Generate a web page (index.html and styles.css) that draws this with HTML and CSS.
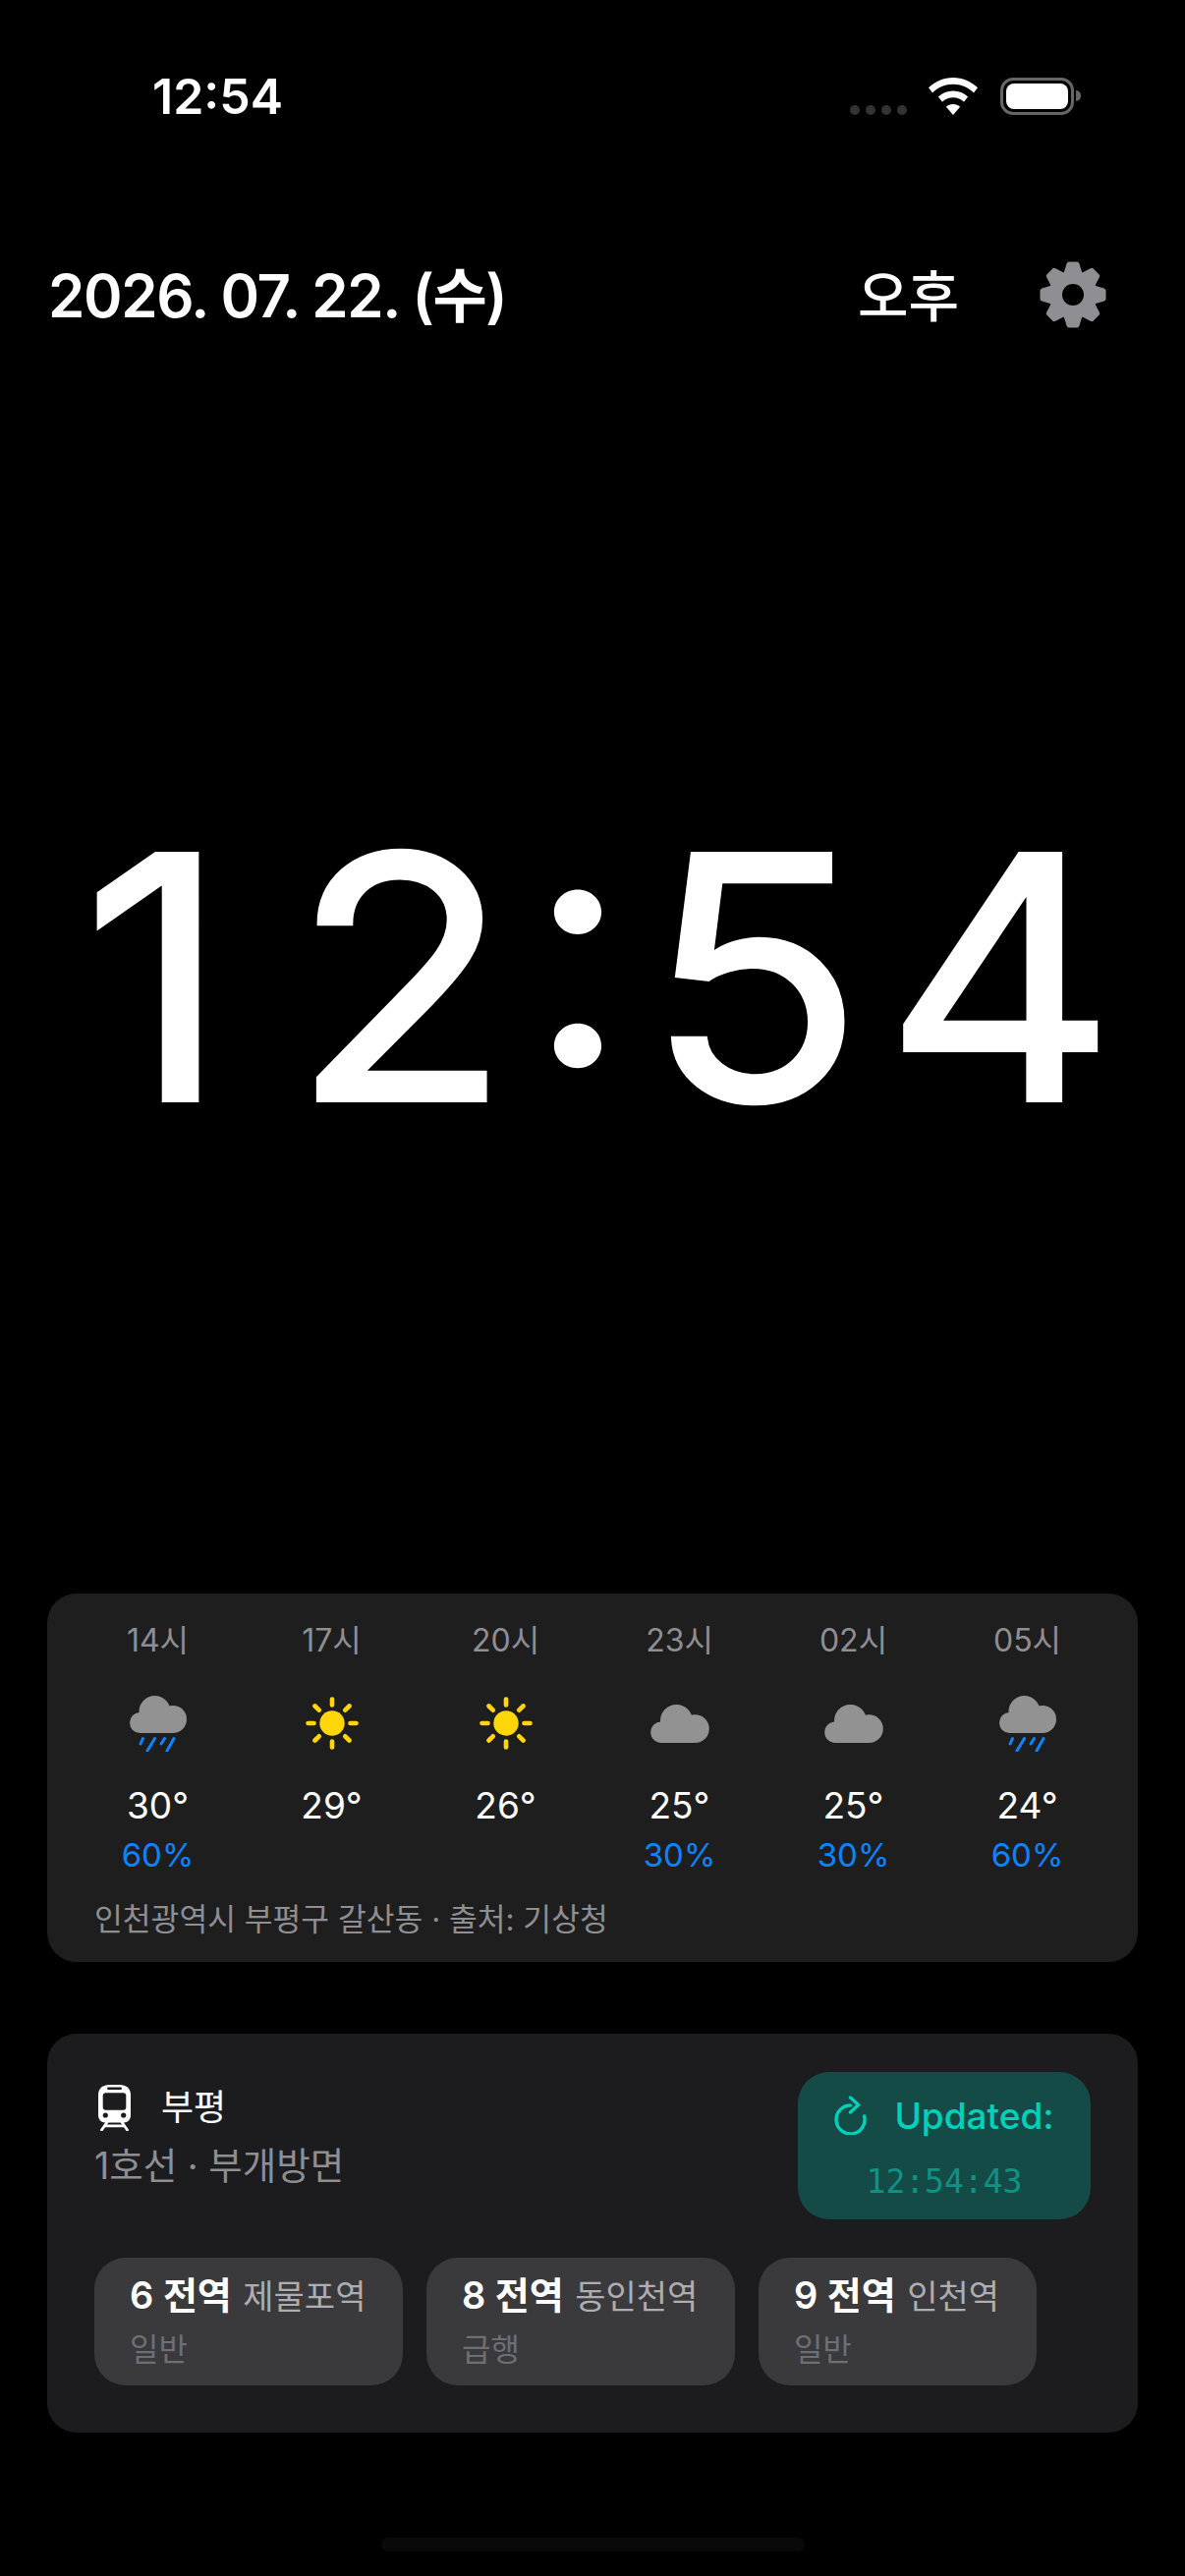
FILE: index.html
```html
<!DOCTYPE html>
<html lang="ko">
<head>
<meta charset="utf-8">
<title>Clock</title>
<link rel="stylesheet" href="styles.css">
</head>
<body>
<svg class="defs" width="0" height="0">
 <symbol id="cloud" viewBox="0 0 58 38">
  <circle cx="10.5" cy="27.5" r="10.5"/>
  <circle cx="25.5" cy="16" r="16"/>
  <circle cx="44" cy="24" r="14"/>
  <rect x="10" y="16" width="34" height="22"/>
 </symbol>
 <symbol id="sun" viewBox="0 0 54 54">
  <circle cx="27" cy="27" r="12.7" fill="#ffd60a"/>
  <g stroke="#ffd60a" stroke-width="4.6" stroke-linecap="round">
   <path d="M27 2.5V8.5M27 45.5V51.5M2.5 27H8.5M45.5 27H51.5M9.5 9.5L13.7 13.7M44.5 9.5L40.3 13.7M9.5 44.5L13.7 40.3M44.5 44.5L40.3 40.3"/>
  </g>
 </symbol>
 <symbol id="tooth" viewBox="0 0 68 68">
  <path d="M24 14L27.500 2.500Q28 .5 30 .5H38Q40 .5 40.500 2.500L44 14Z"/>
 </symbol>
</svg>

<div class="status">
 <span class="status-time">12:54</span>
 <div class="status-icons">
  <div class="dots"><i></i><i></i><i></i><i></i></div>
  <svg class="wifi" width="50" height="38" viewBox="0 0 50 38">
   <path fill="#fff" d="M25 0C34.5 0 43.3 3.8 50 10.300L46 15.500C40.400 10 33 6.800 25 6.800S9.600 10 4 15.500L0 10.300C6.700 3.800 15.500 0 25 0Z"/>
   <path fill="#fff" d="M25 13.500C30.800 13.500 36.100 15.700 40.100 19.500L36 24.700C33.100 21.900 29.300 20.200 25 20.200S16.900 21.900 14 24.700L9.900 19.500C13.900 15.700 19.200 13.500 25 13.500Z"/>
   <path fill="#fff" d="M25 27C27.800 27 30.300 28 32.100 29.800L25 38L17.900 29.800C19.700 28 22.200 27 25 27Z"/>
  </svg>
  <div class="battery"><div class="battery-fill"></div></div>
 </div>
</div>

<div class="date-row">
 <span class="date">2026. 07. 22. (수)</span>
 <span class="ampm">오후</span>
 <svg class="gear" width="68" height="68" viewBox="0 0 68 68">
  <g fill="#8e8e93">
   <circle cx="34" cy="34" r="24.500"/>
   <use href="#tooth" width="68" height="68"/>
   <use href="#tooth" width="68" height="68" transform="rotate(45 34 34)"/>
   <use href="#tooth" width="68" height="68" transform="rotate(90 34 34)"/>
   <use href="#tooth" width="68" height="68" transform="rotate(135 34 34)"/>
   <use href="#tooth" width="68" height="68" transform="rotate(180 34 34)"/>
   <use href="#tooth" width="68" height="68" transform="rotate(225 34 34)"/>
   <use href="#tooth" width="68" height="68" transform="rotate(270 34 34)"/>
   <use href="#tooth" width="68" height="68" transform="rotate(315 34 34)"/>
  </g>
  <circle cx="34" cy="34" r="11" fill="#000"/>
 </svg>
</div>

<div class="clock"><span class="digit">1</span><span class="digit">2</span><span class="digit colon">:</span><span class="digit">5</span><span class="digit">4</span></div>

<div class="card weather">
 <div class="hours">
  <div class="hour">
   <div class="hour-label">14시</div>
   <div class="hour-icon">
    <svg width="58" height="57" viewBox="0 0 58 57">
     <use href="#cloud" width="58" height="38" fill="#929292"/>
     <path d="M13.500 43.500L11 49M25.500 43.500L18 56M35.500 43.500L32 49M45 43.500L38 56" stroke="#0a84ff" stroke-width="3" stroke-linecap="round"/>
    </svg>
   </div>
   <div class="temp">30°</div>
   <div class="pop">60%</div>
  </div>
  <div class="hour">
   <div class="hour-label">17시</div>
   <div class="hour-icon"><svg width="54" height="54"><use href="#sun"/></svg></div>
   <div class="temp">29°</div>
   <div class="pop"></div>
  </div>
  <div class="hour">
   <div class="hour-label">20시</div>
   <div class="hour-icon"><svg width="54" height="54"><use href="#sun"/></svg></div>
   <div class="temp">26°</div>
   <div class="pop"></div>
  </div>
  <div class="hour">
   <div class="hour-label">23시</div>
   <div class="hour-icon"><svg width="60" height="39"><use href="#cloud" width="60" height="39" fill="#929292"/></svg></div>
   <div class="temp">25°</div>
   <div class="pop">30%</div>
  </div>
  <div class="hour">
   <div class="hour-label">02시</div>
   <div class="hour-icon"><svg width="60" height="39"><use href="#cloud" width="60" height="39" fill="#929292"/></svg></div>
   <div class="temp">25°</div>
   <div class="pop">30%</div>
  </div>
  <div class="hour">
   <div class="hour-label">05시</div>
   <div class="hour-icon">
    <svg width="58" height="57" viewBox="0 0 58 57">
     <use href="#cloud" width="58" height="38" fill="#929292"/>
     <path d="M13.500 43.500L11 49M25.500 43.500L18 56M35.500 43.500L32 49M45 43.500L38 56" stroke="#0a84ff" stroke-width="3" stroke-linecap="round"/>
    </svg>
   </div>
   <div class="temp">24°</div>
   <div class="pop">60%</div>
  </div>
 </div>
 <div class="source">인천광역시 부평구 갈산동 · 출처: 기상청</div>
</div>

<div class="card transit">
 <div class="transit-top">
  <div class="station">
   <div class="station-name">
    <svg class="train" width="33" height="47" viewBox="0 0 33 47">
     <path fill="#fff" d="M11 0H22C28 0 33 3.500 33 10V31C33 35.500 30 38.500 26 38.500H7C3 38.500 0 35.500 0 31V10C0 3.500 5 0 11 0Z"/>
     <rect x="4.700" y="8.300" width="23.600" height="17.400" rx="3" fill="#1c1c1e"/>
     <rect x="9" y="2.500" width="15" height="2.600" rx="1.300" fill="#1c1c1e"/>
     <circle cx="7.300" cy="31" r="2.600" fill="#1c1c1e"/>
     <circle cx="25.700" cy="31" r="2.600" fill="#1c1c1e"/>
     <path d="M9 38L3.500 46M24 38L29.500 46M7 41.800H26" stroke="#fff" stroke-width="2.800" stroke-linecap="round"/>
    </svg>
    <span class="station-title">부평</span>
   </div>
   <div class="station-line">1호선 · 부개방면</div>
  </div>
  <div class="updated">
   <div class="updated-row">
    <svg width="35" height="40" viewBox="0 0 35 40" fill="none" stroke="#00d1ba" stroke-width="3.400" stroke-linecap="round" stroke-linejoin="round">
     <path d="M30.600 21A14.500 14.500 0 1 1 16.500 10"/>
     <path d="M16.500 2L24.500 9.500L16.500 17"/>
    </svg>
    <span>Updated:</span>
   </div>
   <div class="updated-time">12:54:43</div>
  </div>
 </div>
 <div class="trains">
  <div class="chip">
   <div><b>6 전역</b> <span class="dest">제물포역</span></div>
   <div class="kind">일반</div>
  </div>
  <div class="chip">
   <div><b>8 전역</b> <span class="dest">동인천역</span></div>
   <div class="kind">급행</div>
  </div>
  <div class="chip">
   <div><b>9 전역</b> <span class="dest">인천역</span></div>
   <div class="kind">일반</div>
  </div>
 </div>
</div>

<div class="home-bar"></div>
</body>
</html>
```
FILE: styles.css
```css
body{
 margin:0;
 width:1206px;
 height:2622px;
 display:flex;
 flex-direction:column;
 background:#000;
 color:#fff;
 font-family:Inter,"Noto Sans CJK KR",sans-serif;
 overflow:hidden;
}
.defs{
 position:absolute;
}

/* status bar */
.status{
 display:flex;
 align-items:center;
 justify-content:space-between;
 height:76px;
 margin-top:60px;
 padding:0 113px 0 155px;
}
.status-time{
 font-size:50px;
 font-weight:600;
}
.status-icons{
 display:flex;
 align-items:flex-end;
 height:38px;
}
.dots{
 display:flex;
 gap:6px;
 margin:0 22px 0 0;
}
.dots i{
 display:block;
 width:10px;
 height:10px;
 border-radius:50%;
 background:#333;
}
.wifi{
 margin-right:23px;
}
.battery{
 position:relative;
 width:75px;
 height:38px;
 box-sizing:border-box;
 border:3px solid #666;
 border-radius:13px;
 padding:3px;
}
.battery:after{
 content:"";
 position:absolute;
 right:-10px;
 top:10px;
 width:5px;
 height:11px;
 border-radius:0 6px 6px 0;
 background:#666;
}
.battery-fill{
 height:100%;
 background:#fff;
 border-radius:8px;
}

/* date */
.date-row{
 display:flex;
 align-items:center;
 height:80px;
 margin-top:124px;
 padding:0 80px 0 49px;
}
.date{
 padding-bottom:8px;
 font-size:60px;
 font-weight:600;
 letter-spacing:-1.400px;
}
.ampm{
 margin-left:auto;
 margin-right:82px;
 padding-bottom:6px;
 font-size:56px;
 font-weight:500;
}

/* big clock */
.clock{
 flex:1;
 display:flex;
 align-items:center;
 justify-content:center;
 padding:26px 30px 0 0;
 font-size:345px;
 font-weight:400;
 line-height:1;
 -webkit-text-stroke:4px #fff;
}
.digit{
 width:250px;
 text-align:center;
 transform:scaleX(1.06);
}
.colon{
 width:110px;
 padding-bottom:70px;
 -webkit-text-stroke:0;
}

/* cards */
.card{
 margin:0 48px;
 border-radius:30px;
}
.weather{
 padding:24px 24px 19px;
 background:#1e1e1e;
}
.hours{
 display:grid;
 grid-template-columns:repeat(6,1fr);
 text-align:center;
}
.hour-label{
 height:48px;
 line-height:48px;
 font-size:32px;
 color:#8e8e93;
}
.hour-icon{
 display:flex;
 align-items:center;
 justify-content:center;
 height:88px;
 margin:16px 0;
}
.temp{
 height:48px;
 line-height:48px;
 font-size:37px;
 font-weight:400;
}
.pop{
 height:50px;
 line-height:53px;
 font-size:33px;
 color:#0a84ff;
}
.source{
 margin:18px 0 0 24px;
 line-height:48px;
 font-size:31.300px;
 color:#8e8e93;
}

.transit{
 margin-top:73px;
 padding:39px 48px 48px;
 background:#1c1c1e;
}
.transit-top{
 display:flex;
 justify-content:space-between;
}
.station-name{
 display:flex;
 align-items:center;
 gap:31px;
 height:72px;
 padding-left:4px;
}
.station-title{
 margin-top:-6px;
 font-size:36px;
 font-weight:400;
}
.station-line{
 margin-top:-2px;
 line-height:52px;
 font-size:37.500px;
 color:#8e8e93;
}
.updated{
 width:298px;
 height:150px;
 box-sizing:border-box;
 padding-top:20px;
 border-radius:32px;
 background:#154b47;
 text-align:center;
}
.updated-row{
 display:flex;
 align-items:center;
 justify-content:center;
 gap:26px;
 height:48px;
 font-size:37px;
 font-weight:500;
 color:#00d1ba;
}
.updated-time{
 margin-top:20px;
 line-height:48px;
 font-family:"DejaVu Sans Mono",monospace;
 font-size:33px;
 color:#0d9383;
}
.trains{
 display:flex;
 gap:24px;
 margin-top:39px;
}
.chip{
 height:130px;
 box-sizing:border-box;
 padding:12px 37.500px 9px 36px;
 border-radius:32px;
 background:#3a3a3c;
 line-height:52px;
 white-space:nowrap;
}
.chip b{
 font-size:38px;
 font-weight:600;
}
.dest{
 margin-left:7px;
 font-size:34px;
 color:#aeaeb2;
}
.kind{
 line-height:44px;
 font-size:32px;
 color:#6e6e73;
}

.home-bar{
 align-self:center;
 flex:none;
 width:431px;
 height:14px;
 margin:107px 0 25px;
 border-radius:7px;
 background:#090909;
}
```
